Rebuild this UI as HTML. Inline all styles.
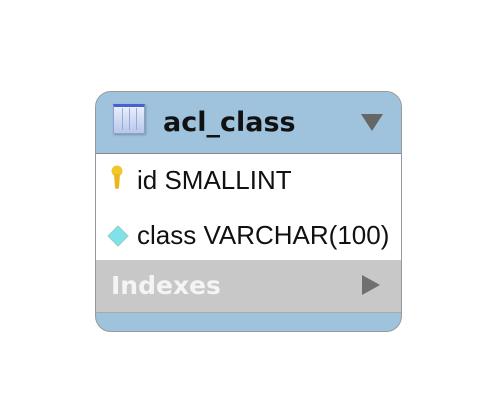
<!DOCTYPE html>
<html><head><style>
body{margin:0;width:490px;height:412px;background:#fff;position:relative;font-family:"DejaVu Sans","Liberation Sans",sans-serif;overflow:hidden}
.box{position:absolute;left:95px;top:91px;width:305px;height:239px;border:1px solid #999;border-radius:16px;overflow:hidden;background:#9fc3dc}
.hdr{position:absolute;left:0;top:0;width:100%;height:60px;background:#9fc3dc}
.white{position:absolute;left:0;top:61px;width:100%;height:106px;background:#fff;border-top:1px solid #888;border-bottom:1px solid #aaa}
.gray{position:absolute;left:0;top:168px;width:100%;height:52px;background:#c8c8c8;border-bottom:1px solid #aaa}
.t{position:absolute;white-space:nowrap;line-height:1}
.r{font-family:"Liberation Sans",sans-serif;font-size:26px;color:#111}
</style></head><body>
<div class="box">
 <div class="hdr"></div>
 <div class="white"></div>
 <div class="gray"></div>
 <div style="position:absolute;left:17px;top:12px;width:32px;height:30px;background:linear-gradient(#e8eefa,#b8c8ec);border:1px solid #8fa0cc;box-sizing:border-box;border-top:3px solid #4a5fd0;box-shadow:1px 1px 2px #7a8fa8"></div>
 <div style="position:absolute;left:26px;top:16px;width:1px;height:22px;background:#9aaad8"></div>
 <div style="position:absolute;left:33px;top:16px;width:1px;height:22px;background:#9aaad8"></div>
 <div style="position:absolute;left:40px;top:16px;width:1px;height:22px;background:#9aaad8"></div>
 <div class="t" style="left:67px;top:17px;font-size:27px;font-weight:bold;color:#111">acl_class</div>
 <svg style="position:absolute;left:265px;top:22px" width="22" height="17"><polygon points="0,0 22,0 11,17" fill="#666"/></svg>
 <svg style="position:absolute;left:14px;top:73px" width="14" height="26"><ellipse cx="7" cy="6" rx="5.5" ry="5.5" fill="#f2c62a"/><path d="M4,9 L10,9 L9,23 Q7,25 5,23 Z" fill="#e8b820"/></svg>
 <div class="t r" style="left:41px;top:75px">id SMALLINT</div>
 <svg style="position:absolute;left:11px;top:133px" width="22" height="22"><polygon points="11,1 21,11 11,21 1,11" fill="#7ee3e8" stroke="#9cc" stroke-width="1"/></svg>
 <div class="t r" style="left:41px;top:130px">class VARCHAR(100)</div>
 <div class="t" style="left:15px;top:181px;font-size:25px;font-weight:bold;color:#f4f4f4">Indexes</div>
 <svg style="position:absolute;left:266px;top:183px" width="18" height="20"><polygon points="0,0 18,10 0,20" fill="#707070"/></svg>
</div>
</body></html>
